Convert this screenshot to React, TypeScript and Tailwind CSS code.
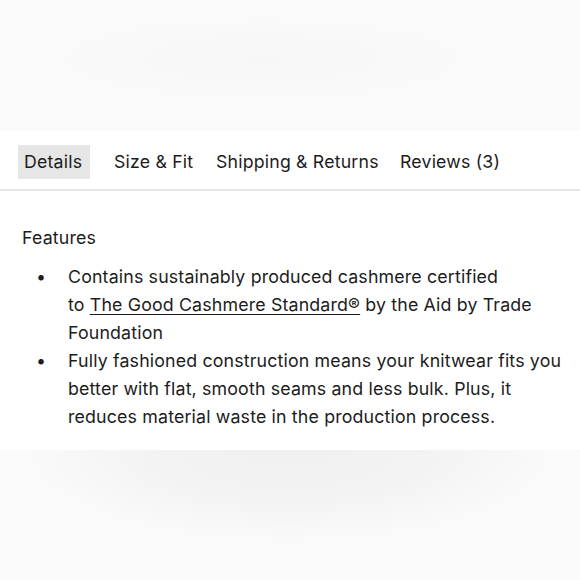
import React from "react";

export default function App() {
  const font = { fontFamily: "Inter, 'Open Sans', sans-serif" };
  return (
    <div className="w-[580px] h-[580px] flex flex-col bg-[#fafafa] text-[#1c1c1c]" style={font}>
      <div className="h-[131px] bg-[radial-gradient(ellipse_45%_40%_at_45%_45%,#f7f7f7_0%,#f9f9f9_60%,#fbfbfb_100%)]" />
      <div className="h-[319px] bg-white flex flex-col">
        <div className="h-[60px] flex items-end border-b-2 border-[#e6e6e6]">
          <div className="flex items-center text-[17.7px] tracking-[0.2px] mb-[10px] pl-[18px]">
            <div className="bg-[#e6e6e6] w-[72px] pl-[6px] h-[34px] flex items-center">Details</div>
            <div className="ml-[24px] w-[102px]">Size &amp; Fit</div>
            <div className="w-[184px]">Shipping &amp; Returns</div>
            <div>Reviews (3)</div>
          </div>
        </div>
        <div className="pl-[22px] pt-[33px] text-[17.8px] tracking-[0.15px] leading-[28px]">
          <div>Features</div>
          <ul className="mt-[11px]">
            <li className="flex">
              <span className="w-[46px] pl-[14px] shrink-0">•</span>
              <span className="w-[500px]">
                Contains sustainably produced cashmere certified
                <br />
                to <span className="underline underline-offset-[3px]">The Good Cashmere Standard®</span> by the Aid by Trade
                <br />
                Foundation
              </span>
            </li>
            <li className="flex">
              <span className="w-[46px] pl-[14px] shrink-0">•</span>
              <span className="w-[500px]">
                Fully fashioned construction means your knitwear fits you
                <br />
                better with flat, smooth seams and less bulk. Plus, it
                <br />
                reduces material waste in the production process.
              </span>
            </li>
          </ul>
        </div>
      </div>
      <div className="flex-1 bg-[radial-gradient(ellipse_45%_70%_at_50%_0%,#f0f0f0_0%,#f3f3f3_55%,#fafafa_100%)]" />
    </div>
  );
}
